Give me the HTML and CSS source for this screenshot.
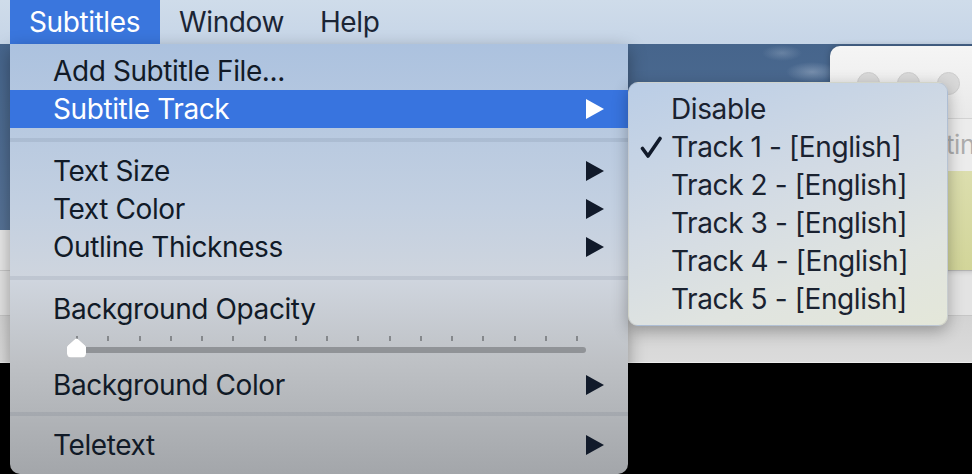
FILE: index.html
```html
<!DOCTYPE html>
<html lang="en">
<head>
    <meta charset="UTF-8">
    <title>Subtitles Menu</title>
    <link rel="stylesheet" href="styles.css">
</head>
<body>

<div class="screen">
    <div class="menubar">
        <span class="menubar-item active">Subtitles</span>
        <span class="menubar-item">Window</span>
        <span class="menubar-item">Help</span>
    </div>

    <div class="desktop">
        <div class="player">
            <div class="band band-top"></div>
            <div class="band band-mid"></div>
            <div class="band band-low"></div>
            <div class="video"></div>
        </div>
        <div class="prefs">
            <div class="titlebar">
                <span class="light"></span>
                <span class="light"></span>
                <span class="light"></span>
            </div>
            <div class="toolbar">tings</div>
            <div class="swatch"></div>
        </div>
    </div>

    <!-- main dropdown -->
    <div class="menu main-menu">
        <div class="item">Add Subtitle File...</div>
        <div class="item selected">
            <span>Subtitle Track</span>
            <svg class="arrow" viewBox="0 0 18 20"><polygon points="0,0 18,10 0,20"/></svg>
        </div>
        <div class="separator"></div>
        <div class="item">
            <span>Text Size</span>
            <svg class="arrow" viewBox="0 0 18 20"><polygon points="0,0 18,10 0,20"/></svg>
        </div>
        <div class="item">
            <span>Text Color</span>
            <svg class="arrow" viewBox="0 0 18 20"><polygon points="0,0 18,10 0,20"/></svg>
        </div>
        <div class="item">
            <span>Outline Thickness</span>
            <svg class="arrow" viewBox="0 0 18 20"><polygon points="0,0 18,10 0,20"/></svg>
        </div>
        <div class="separator"></div>
        <div class="item label">Background Opacity</div>
        <div class="slider-row">
            <div class="slider">
                <div class="ticks">
                    <i></i><i></i><i></i><i></i><i></i><i></i><i></i><i></i><i></i>
                    <i></i><i></i><i></i><i></i><i></i><i></i><i></i><i></i>
                </div>
                <div class="track"></div>
                <svg class="knob" viewBox="0 0 19 20"><path d="M8.3 0.8 Q9.5 0 10.7 0.8 L18.2 7.4 Q19 8.1 19 9.2 L19 15.5 Q19 19.5 15 19.5 L4 19.5 Q0 19.5 0 15.5 L0 9.2 Q0 8.1 0.8 7.4 Z"/></svg>
            </div>
        </div>
        <div class="item">
            <span>Background Color</span>
            <svg class="arrow" viewBox="0 0 18 20"><polygon points="0,0 18,10 0,20"/></svg>
        </div>
        <div class="separator last"></div>
        <div class="item">
            <span>Teletext</span>
            <svg class="arrow" viewBox="0 0 18 20"><polygon points="0,0 18,10 0,20"/></svg>
        </div>
    </div>

    <!-- Subtitle Track submenu -->
    <div class="menu submenu">
        <div class="item"><span class="check"></span>Disable</div>
        <div class="item">
            <span class="check"><svg viewBox="0 0 22 22"><path d="M2.5 12.5 L8 20 L20 2.5"/></svg></span>Track 1 - [English]
        </div>
        <div class="item"><span class="check"></span>Track 2 - [English]</div>
        <div class="item"><span class="check"></span>Track 3 - [English]</div>
        <div class="item"><span class="check"></span>Track 4 - [English]</div>
        <div class="item"><span class="check"></span>Track 5 - [English]</div>
    </div>
</div>

</body>
</html>
```

FILE: styles.css
```css
body {
    margin: 0;
    background: #000;
}
.screen {
    width: 972px;
    height: 474px;
    position: relative;
    overflow: hidden;
    font-family: Inter, "Noto Sans", sans-serif;
    letter-spacing: -0.4px;
}

/* top bar */
.menubar {
    height: 44px;
    display: flex;
    padding-left: 10px;
    background: linear-gradient(#cfdcea, #c6d5e7);
    font-size: 28px;
    line-height: 44px;
    color: #1b2535;
}
.menubar-item {
    padding: 0 19px;
}
.menubar-item.active {
    padding-right: 20px;
    background: #3a76dd;
    color: #fff;
}
.menubar-item:last-child {
    padding-left: 17px;
}

/* desktop and windows behind the menu */
.desktop {
    position: relative;
    height: 430px;
    background:
        radial-gradient(ellipse 20px 8px at 782px 9px, rgba(220, 230, 240, 0.22), transparent),
        radial-gradient(ellipse 26px 10px at 812px 28px, rgba(225, 232, 242, 0.3), transparent),
        linear-gradient(#46658c, #6c85a4);
}
.player {
    position: absolute;
    left: 0;
    top: 186px;
    width: 972px;
    height: 244px;
    display: flex;
    flex-direction: column;
}
.band-top {
    height: 40px;
    background: #e8e8e8;
    border-bottom: 1px solid #c9c9c9;
}
.band-mid {
    height: 44px;
    background: #e3e3e3;
    border-bottom: 1px solid #c6c6c6;
}
.band-low {
    height: 46px;
    background: linear-gradient(#d3d3d3, #dbdbdb);
    border-bottom: 1px solid #ececec;
}
.video {
    flex: 1;
    background: #000;
}
.prefs {
    position: absolute;
    left: 830px;
    top: 2px;
    width: 160px;
    height: 224px;
    border-radius: 10px 0 0 0;
    overflow: hidden;
    display: flex;
    flex-direction: column;
    box-shadow: 0 0 6px rgba(0, 0, 0, 0.25);
}
.titlebar {
    height: 73px;
    display: flex;
    gap: 17px;
    padding: 26px 0 0 27px;
    box-sizing: border-box;
    background: linear-gradient(#f5f5f5, #e9e9e9);
    border-bottom: 1px solid #d3d3d3;
}
.light {
    width: 23px;
    height: 23px;
    border-radius: 50%;
    background: #d9d9d9;
    border: 1px solid #cdcdcd;
    box-sizing: border-box;
}
.toolbar {
    height: 52px;
    line-height: 52px;
    padding-left: 116px;
    background: #ececec;
    color: #adadad;
    font-size: 26px;
    white-space: nowrap;
}
.swatch {
    flex: 1;
    background: linear-gradient(#dcdeae, #d2d599);
}

/* menus */
.menu {
    position: absolute;
    box-sizing: border-box;
    font-size: 28px;
    color: #111a27;
}
.main-menu {
    left: 10px;
    top: 44px;
    width: 618px;
    height: 430px;
    padding-top: 8px;
    border-radius: 0 0 10px 10px;
    background: linear-gradient(#acc2df 0%, #c3d0e1 38%, #cfd5de 55%, #bec1c5 74%, #a3a6aa 100%);
    box-shadow: 0 6px 18px rgba(0, 0, 0, 0.35);
}
.item {
    height: 38px;
    line-height: 38px;
    display: flex;
    align-items: center;
    justify-content: space-between;
    padding: 0 24px 0 43px;
    white-space: nowrap;
}
.item.selected {
    background: #3874df;
    color: #fff;
}
.item.label {
    margin-top: 3px;
}
.arrow {
    width: 18px;
    height: 20px;
    fill: #111a2a;
}
.selected .arrow {
    fill: #fff;
}
.separator {
    height: 4px;
    margin: 10px 0;
    background: rgba(30, 50, 80, 0.09);
}
.separator.last {
    margin: 8px 0 10px;
}

/* opacity slider */
.slider-row {
    height: 38px;
    padding: 8px 0 0 57px;
    box-sizing: border-box;
}
.slider {
    position: relative;
    width: 519px;
}
.ticks {
    height: 5px;
    display: flex;
    justify-content: space-between;
    padding: 0 8px 0 9px;
}
.ticks i {
    width: 2px;
    height: 5px;
    background: #85888c;
}
.track {
    height: 6px;
    margin-top: 6px;
    border-radius: 3px;
    background: #909397;
}
.knob {
    position: absolute;
    left: 0;
    top: 2px;
    width: 19px;
    height: 20px;
    fill: #fff;
    filter: drop-shadow(0 0.5px 0.5px rgba(0, 0, 0, 0.3));
}

/* submenu */
.submenu {
    left: 628px;
    top: 82px;
    width: 320px;
    height: 244px;
    padding-top: 7px;
    border-radius: 10px;
    color: #1a2230;
    background: linear-gradient(160deg, #bacde6 0%, #d3dbe4 45%, #e0e4e0 75%, #e4e7d9 100%);
    border: 1px solid rgba(0, 0, 0, 0.08);
    box-shadow: 0 5px 16px rgba(0, 0, 0, 0.3);
}
.submenu .item {
    justify-content: flex-start;
    padding: 0 0 0 11px;
}
.check {
    width: 31px;
    height: 22px;
    display: flex;
}
.check svg {
    width: 22px;
    height: 22px;
    fill: none;
    stroke: #111a2a;
    stroke-width: 3.6;
    stroke-linecap: round;
    stroke-linejoin: round;
}
```
